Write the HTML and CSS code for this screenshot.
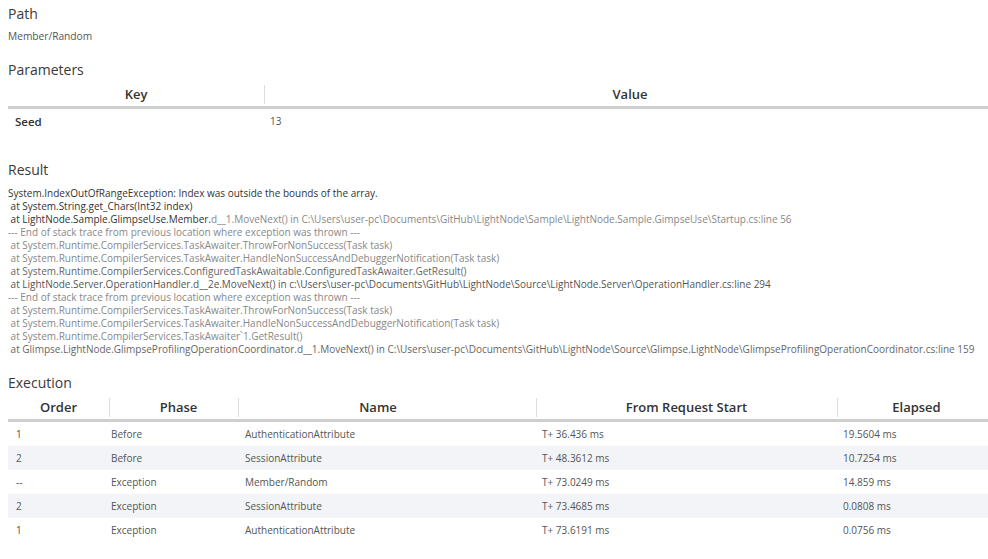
FILE: index.html
```html
<!DOCTYPE html>
<html>
<head>
<meta charset="utf-8">
<link rel="stylesheet" href="styles.css">
</head>
<body>
<h2 class="title">Path</h2>
<p class="path">Member/Random</p>

<h2 class="title params-title">Parameters</h2>
<table class="grid params">
  <colgroup><col class="c-key"><col class="c-val"></colgroup>
  <thead><tr><th>Key</th><th>Value</th></tr></thead>
  <tbody><tr><td class="key">Seed</td><td>13</td></tr></tbody>
</table>

<h2 class="title result-title">Result</h2>
<pre class="trace"><span class="dk">System.IndexOutOfRangeException: Index was outside the bounds of the array.</span>
<span class="dk"> at System.String.get_Chars(Int32 index)</span>
<span class="dk"> at LightNode.Sample.GlimpseUse.Member.</span><span class="lt">d__1.MoveNext() in C:\Users\user-pc\Documents\GitHub\LightNode\Sample\LightNode.Sample.GimpseUse\Startup.cs:line 56</span>
<span class="lt">--- End of stack trace from previous location where exception was thrown ---</span>
<span class="lt"> at System.Runtime.CompilerServices.TaskAwaiter.ThrowForNonSuccess(Task task)</span>
<span class="lt"> at System.Runtime.CompilerServices.TaskAwaiter.HandleNonSuccessAndDebuggerNotification(Task task)</span>
<span class="md"> at System.Runtime.CompilerServices.ConfiguredTaskAwaitable.ConfiguredTaskAwaiter.GetResult()</span>
<span class="md2"> at LightNode.Server.OperationHandler.d__2e.MoveNext() in c:\Users\user-pc\Documents\GitHub\LightNode\Source\LightNode.Server\OperationHandler.cs:line 294</span>
<span class="lt">--- End of stack trace from previous location where exception was thrown ---</span>
<span class="lt"> at System.Runtime.CompilerServices.TaskAwaiter.ThrowForNonSuccess(Task task)</span>
<span class="lt"> at System.Runtime.CompilerServices.TaskAwaiter.HandleNonSuccessAndDebuggerNotification(Task task)</span>
<span class="lt"> at System.Runtime.CompilerServices.TaskAwaiter`1.GetResult()</span>
<span class="md"> at Glimpse.LightNode.GlimpseProfilingOperationCoordinator.d__1.MoveNext() in C:\Users\user-pc\Documents\GitHub\LightNode\Source\Glimpse.LightNode\GlimpseProfilingOperationCoordinator.cs:line 159</span></pre>

<h2 class="title exec-title">Execution</h2>
<table class="grid exec">
  <colgroup><col class="c-order"><col class="c-phase"><col class="c-name"><col class="c-from"><col class="c-elapsed"></colgroup>
  <thead><tr><th>Order</th><th class="h-phase">Phase</th><th class="h-name">Name</th><th>From Request Start</th><th>Elapsed</th></tr></thead>
  <tbody>
    <tr><td>1</td><td>Before</td><td>AuthenticationAttribute</td><td>T+ 36.436 ms</td><td>19.5604 ms</td></tr>
    <tr><td>2</td><td>Before</td><td>SessionAttribute</td><td>T+ 48.3612 ms</td><td>10.7254 ms</td></tr>
    <tr><td>--</td><td>Exception</td><td>Member/Random</td><td>T+ 73.0249 ms</td><td>14.859 ms</td></tr>
    <tr><td>2</td><td>Exception</td><td>SessionAttribute</td><td>T+ 73.4685 ms</td><td>0.0808 ms</td></tr>
    <tr><td>1</td><td>Exception</td><td>AuthenticationAttribute</td><td>T+ 73.6191 ms</td><td>0.0756 ms</td></tr>
  </tbody>
</table>
</body>
</html>
```

FILE: styles.css
```css
html {
  overflow: hidden;
  background: #fff;
}

body {
  margin: 0;
  padding: 3px 0 0 8px;
  font-family: "Open Sans", "Noto Sans", sans-serif;
  color: #333;
}

.title {
  margin: 0;
  font-size: 14px;
  line-height: 21px;
  font-weight: 400;
  color: #3a3a3a;
}

.path {
  margin: 5px 0 0;
  font-size: 10.2px;
  line-height: 15px;
  color: #555;
}

.params-title { margin-top: 15px; }
.result-title { margin-top: 26px; }
.exec-title { margin-top: 16px; }

.grid {
  border-collapse: collapse;
  table-layout: fixed;
  width: 988px;
}

.params { margin-top: 4px; }
.exec { margin-top: 4px; }

.grid th {
  height: 20px;
  padding: 0 6px 2px;
  font-size: 13px;
  font-weight: 600;
  color: #333;
  text-align: center;
  border-bottom: 3px solid #cfcfcf;
  background-image: linear-gradient(#dcdcdc, #dcdcdc);
  background-repeat: no-repeat;
  background-size: 1px 19px;
  background-position: 0 1px;
}

.grid th:first-child { background-image: none; }
.exec th.h-phase { padding-left: 16px; }
.exec th.h-name { padding-right: 24px; }

.grid td {
  height: 24px;
  padding: 0 6px;
  font-size: 10px;
  color: #555;
  vertical-align: middle;
}

.params td.key {
  font-weight: 600;
  font-size: 11.5px;
  color: #333;
  padding-left: 7px;
}

.exec td:nth-child(1) { padding-left: 8px; }
.exec td:nth-child(2) { padding-left: 2px; }
.exec td:nth-child(3) { padding-left: 7px; }

.c-key { width: 256px; }

.c-order { width: 101px; }
.c-phase { width: 129px; }
.c-name { width: 298px; }
.c-from { width: 301px; }

.exec tbody tr:nth-child(even) td { background: #f2f4f7; }

.trace {
  margin: 7px 0 0;
  font-family: "Open Sans", "Noto Sans", sans-serif;
  font-size: 10px;
  line-height: 13px;
  white-space: pre;
}

.trace .dk { color: #333; }
.trace .md { color: #666; }
.trace .md2 { color: #555; }
.trace .lt { color: #888; }
```
